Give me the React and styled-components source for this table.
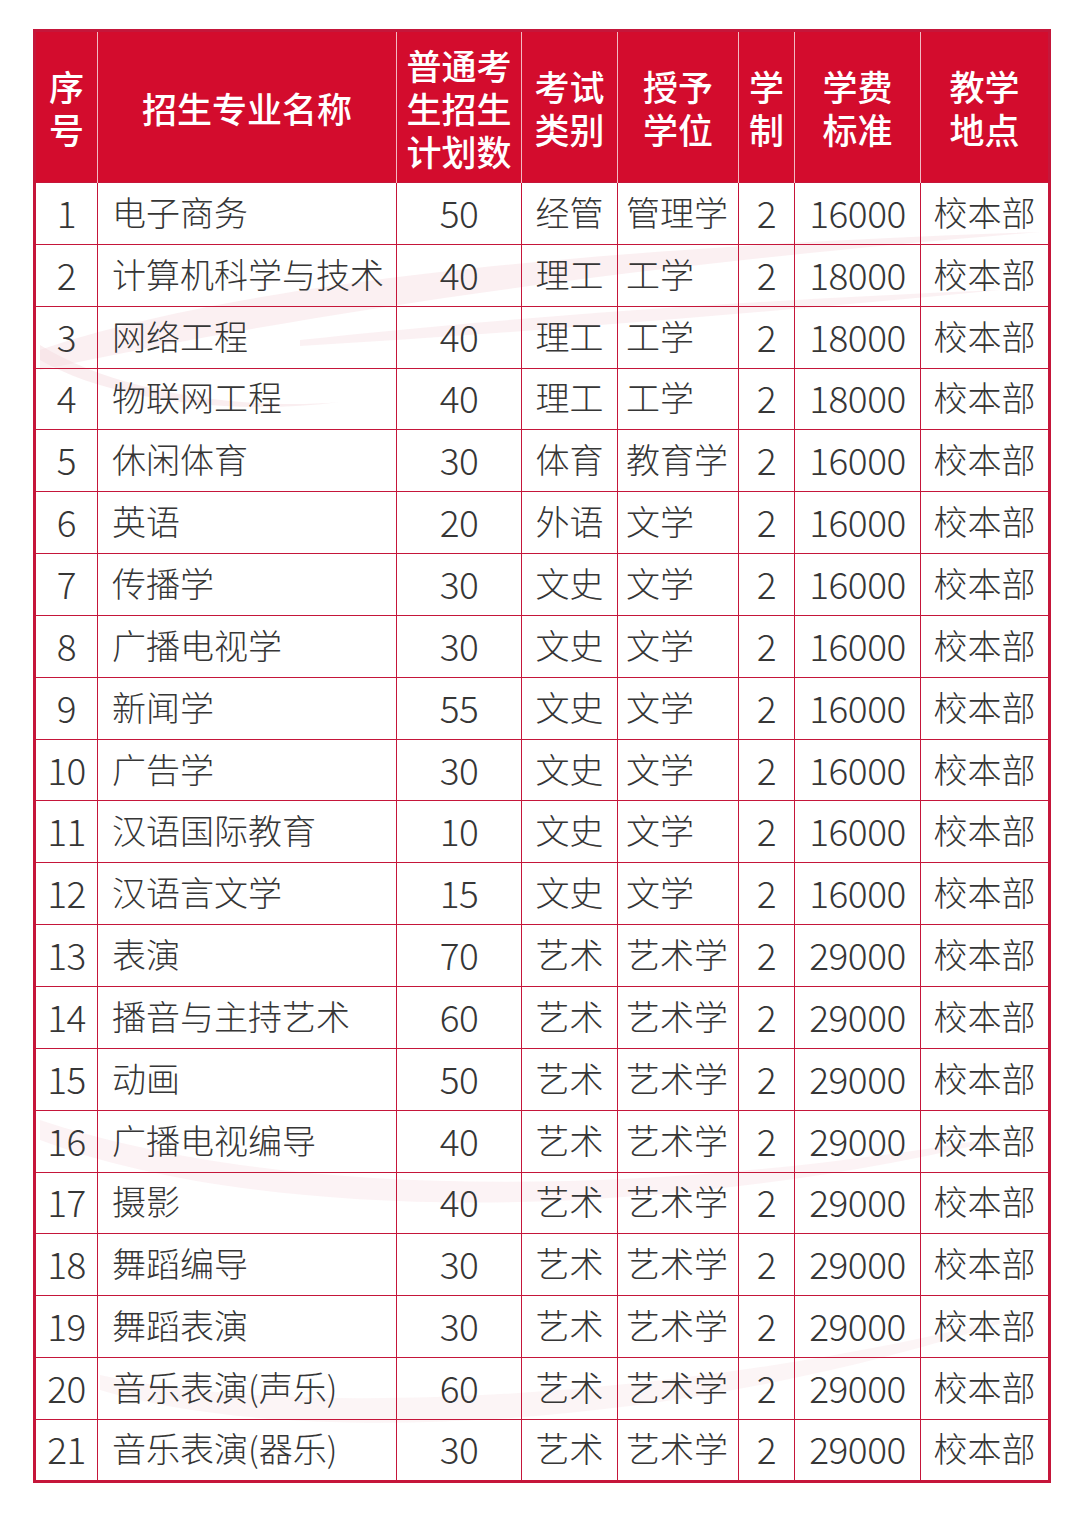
import React from "react";
import styled, { createGlobalStyle } from "styled-components";

const GlobalStyle = createGlobalStyle`
  body {
    margin: 0;
    background: #ffffff;
    font-family: "Noto Sans CJK SC", "Noto Sans", sans-serif;
  }
`;

const Page = styled.div`
  position: relative;
  width: 1080px;
  height: 1514px;
  padding: 29px 30px 0 33px;
  box-sizing: border-box;
`;

const Swoosh = styled.svg`
  position: absolute;
  left: 0;
  top: 0;
  width: 1080px;
  height: 1514px;
  pointer-events: none;
`;

const Table = styled.table`
  position: relative;
  border-collapse: collapse;
  table-layout: fixed;
  width: 1015px;
  border: 3px solid #c5163a;
  color: #363636;
`;

const HeadCell = styled.th`
  background: #d30c2d;
  color: #ffffff;
  font-weight: 500;
  font-size: 35px;
  line-height: 43px;
  height: 150px;
  padding: 0;
  text-align: center;
  vertical-align: middle;
  border: 1.5px solid #f2b9c2;
  border-top: none;
  border-bottom: none;
  &:first-child { border-left: none; }
  &:last-child { border-right: none; }
`;

const HeadLine = styled.div`
  display: block;
  height: 43px;
  overflow: visible;
`;

const Cell = styled.td`
  box-sizing: border-box;
  height: 61.85px;
  padding: 0 0 3px ${(p) => p.$indent || 0}px;
  text-align: ${(p) => (p.$indent ? "left" : "center")};
  vertical-align: middle;
  font-size: ${(p) => (p.$num ? "37px" : "34px")};
  line-height: 40px;
  font-weight: 300;
  white-space: nowrap;
  letter-spacing: ${(p) => (p.$num ? "-0.5px" : "0")};
  border: 1.5px solid #c5163a;
  background: transparent;
`;

const widths = [63, 299, 125, 96, 121, 56, 126, 129];

const headers = [
  ["序", "号"],
  ["招生专业名称"],
  ["普通考", "生招生", "计划数"],
  ["考试", "类别"],
  ["授予", "学位"],
  ["学", "制"],
  ["学费", "标准"],
  ["教学", "地点"],
];

const rows = [
  ["电子商务", 50, "经管", "管理学", 16000],
  ["计算机科学与技术", 40, "理工", "工学", 18000],
  ["网络工程", 40, "理工", "工学", 18000],
  ["物联网工程", 40, "理工", "工学", 18000],
  ["休闲体育", 30, "体育", "教育学", 16000],
  ["英语", 20, "外语", "文学", 16000],
  ["传播学", 30, "文史", "文学", 16000],
  ["广播电视学", 30, "文史", "文学", 16000],
  ["新闻学", 55, "文史", "文学", 16000],
  ["广告学", 30, "文史", "文学", 16000],
  ["汉语国际教育", 10, "文史", "文学", 16000],
  ["汉语言文学", 15, "文史", "文学", 16000],
  ["表演", 70, "艺术", "艺术学", 29000],
  ["播音与主持艺术", 60, "艺术", "艺术学", 29000],
  ["动画", 50, "艺术", "艺术学", 29000],
  ["广播电视编导", 40, "艺术", "艺术学", 29000],
  ["摄影", 40, "艺术", "艺术学", 29000],
  ["舞蹈编导", 30, "艺术", "艺术学", 29000],
  ["舞蹈表演", 30, "艺术", "艺术学", 29000],
  ["音乐表演(声乐)", 60, "艺术", "艺术学", 29000],
  ["音乐表演(器乐)", 30, "艺术", "艺术学", 29000],
];

// faint pink ribbons printed behind the table
function Decoration() {
  return (
    <Swoosh viewBox="0 0 1080 1514">
      <path
        d="M40 350 C 200 295, 500 250, 1040 232 C 600 268, 300 315, 40 370 Z"
        fill="#f7e1e5"
        opacity="0.5"
      />
      <path
        d="M300 340 C 500 318, 750 300, 1000 290 C 760 313, 520 333, 300 346 Z"
        fill="#f7e1e5"
        opacity="0.45"
      />
      <path
        d="M40 345 C 120 395, 250 410, 340 402 C 230 416, 110 400, 40 360 Z"
        fill="#f5d9de"
        opacity="0.45"
      />
      <path
        d="M40 1120 C 250 1190, 600 1210, 1040 1130 C 650 1230, 250 1220, 40 1140 Z"
        fill="#f7e1e5"
        opacity="0.4"
      />
      <path
        d="M100 1375 C 300 1420, 700 1400, 1040 1310 C 700 1430, 300 1450, 100 1390 Z"
        fill="#f7e1e5"
        opacity="0.35"
      />
    </Swoosh>
  );
}

export default function App() {
  return (
    <>
      <GlobalStyle />
      <Page>
        <Decoration />
        <Table>
          <colgroup>
            {widths.map((w, i) => (
              <col key={i} style={{ width: w }} />
            ))}
          </colgroup>
          <thead>
            <tr>
              {headers.map((lines, i) => (
                <HeadCell key={i}>
                  {lines.map((l, j) => (
                    <HeadLine key={j}>{l}</HeadLine>
                  ))}
                </HeadCell>
              ))}
            </tr>
          </thead>
          <tbody>
            {rows.map((r, i) => (
              <tr key={i}>
                <Cell $num>{i + 1}</Cell>
                <Cell $indent={14}>{r[0]}</Cell>
                <Cell $num>{r[1]}</Cell>
                <Cell>{r[2]}</Cell>
                <Cell $indent={8}>{r[3]}</Cell>
                <Cell $num>2</Cell>
                <Cell $num>{r[4]}</Cell>
                <Cell>校本部</Cell>
              </tr>
            ))}
          </tbody>
        </Table>
      </Page>
    </>
  );
}
